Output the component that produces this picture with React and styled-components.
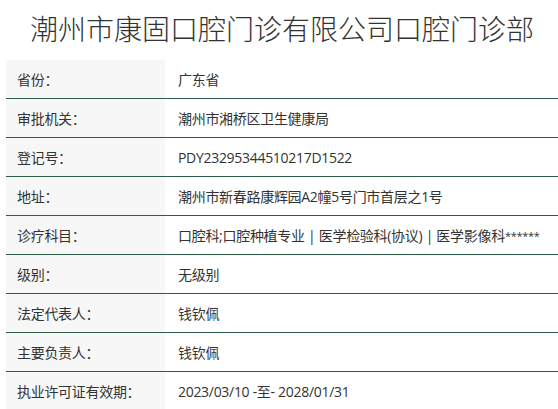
import styled, { createGlobalStyle } from 'styled-components'

const GlobalStyle = createGlobalStyle`
  body {
    margin: 0;
    background: #ffffff;
    font-family: "Open Sans", "Noto Sans CJK SC", sans-serif;
    color: #333333;
  }
`

const Page = styled.div`
  padding: 0 0 0 6px;
  overflow: hidden;
`

const Title = styled.h1`
  margin: 0;
  padding: 9px 0 0 0;
  height: 50px;
  box-sizing: border-box;
  text-align: center;
  font-size: 28px;
  font-weight: 300;
  line-height: 38px;
  color: #333333;
  font-family: "Noto Sans CJK SC", sans-serif;
  white-space: nowrap;
`

const Table = styled.div`
  display: grid;
  grid-template-columns: 159px 1fr;
  margin-top: 10px;
  width: 560px;
`

const Cell = styled.div`
  height: 38px;
  display: flex;
  align-items: center;
  font-size: 14px;
  letter-spacing: -0.3px;
  border-bottom: 1.5px solid #2d5c44;
  white-space: nowrap;
`

const Label = styled(Cell)`
  background: #f7f7f7;
  padding-left: 11px;
`

const Value = styled(Cell)`
  padding-left: 13px;
`

const Stars = styled.span`
  font-size: 11px;
  align-self: flex-start;
  margin-top: 12px;
`

const rows = [
  ['省份：', '广东省'],
  ['审批机关：', '潮州市湘桥区卫生健康局'],
  ['登记号：', 'PDY23295344510217D1522'],
  ['地址：', '潮州市新春路康辉园A2幢5号门市首层之1号'],
  ['诊疗科目：', '口腔科;口腔种植专业 | 医学检验科(协议) | 医学影像科', true],
  ['级别：', '无级别'],
  ['法定代表人：', '钱钦佩'],
  ['主要负责人：', '钱钦佩'],
  ['执业许可证有效期：', '2023/03/10 -至- 2028/01/31'],
]

export default function App() {
  return (
    <Page>
      <GlobalStyle />
      <Title>潮州市康固口腔门诊有限公司口腔门诊部</Title>
      <Table>
        {rows.map(([label, value, more]) => (
          <>
            <Label key={label}>{label}</Label>
            <Value key={label + 'v'}>
              {value}
              {more && <Stars>******</Stars>}
            </Value>
          </>
        ))}
      </Table>
    </Page>
  )
}
